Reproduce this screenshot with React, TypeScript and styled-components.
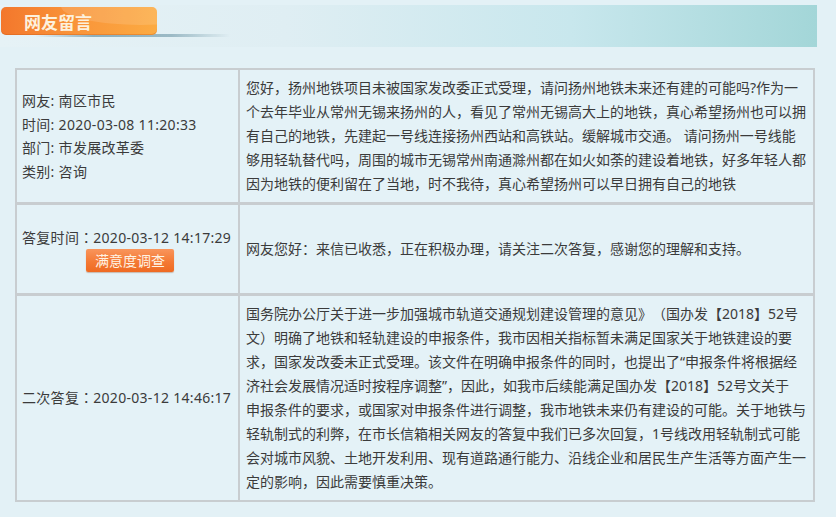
import React from "react";
import styled, { createGlobalStyle } from "styled-components";

const Global = createGlobalStyle`
  html, body { margin: 0; padding: 0; background: #e3f1f6; }
  body {
    font-family: "Noto Sans", "Noto Sans CJK SC", sans-serif;
    color: #3b3b3b;
    text-spacing-trim: space-all;
  }
`;

const Page = styled.div`
  width: 836px;
  height: 517px;
  padding-top: 5px;
  box-sizing: border-box;
  background: #e3f1f6;
  overflow: hidden;
`;

const HeaderBar = styled.div`
  position: relative;
  width: 817px;
  height: 42px;
  background: linear-gradient(90deg, #e6f2f6 0%, #dfeef3 35%, #c8e7ed 70%, #a3d6d8 100%);
  display: flex;
  align-items: flex-start;
`;

const Tab = styled.div`
  position: relative;
  margin: 2px 0 0 1px;
  width: 156px;
  height: 28px;
  border-radius: 5px;
  background: linear-gradient(90deg, #f3772c 0%, #f99339 45%, #fcab42 100%);
  box-shadow: inset 0 -1px 0 rgba(200, 90, 20, 0.35);
  display: flex;
  align-items: center;
  padding-left: 23px;
  box-sizing: border-box;
  overflow: hidden;
  &::before {
    content: "";
    position: absolute;
    left: 60px;
    top: -20px;
    width: 160px;
    height: 38px;
    border-radius: 50%;
    background: rgba(255, 255, 255, 0.13);
  }
`;

const TabShadow = styled.div`
  position: absolute;
  left: 35px;
  top: 29px;
  width: 195px;
  height: 3px;
  background: linear-gradient(90deg, rgba(70,120,140,0) 0%, rgba(70,120,140,0.55) 30%, rgba(70,120,140,0.45) 70%, rgba(70,120,140,0) 100%);
  filter: blur(0.6px);
`;

const TabTitle = styled.span`
  position: relative;
  font-family: "Noto Sans CJK SC", sans-serif;
  font-size: 17px;
  font-weight: 700;
  color: #fdf1dd;
`;

const Table = styled.div`
  margin: 21px 0 0 15px;
  width: 800px;
  box-sizing: border-box;
  display: grid;
  grid-template-columns: 221px 1fr;
  column-gap: 2px;
  row-gap: 3px;
  padding: 2px;
  background: #c8cdd0;
`;

const LeftCell = styled.div`
  background: #e4f2f7;
  display: flex;
  flex-direction: column;
  justify-content: center;
  align-items: flex-start;
  padding: 6px 5px;
  font-size: 14px;
  line-height: 23.5px;
  letter-spacing: 0.3px;
  color: #3b3b3b;
  white-space: nowrap;
`;

const RightCell = styled.div`
  background: #e4f2f7;
  display: flex;
  flex-direction: column;
  justify-content: center;
  padding: 6px 6px;
  font-size: 14px;
  line-height: 24px;
  color: #3b3b3b;
  min-height: 76px;
`;

const Line = styled.div`
  white-space: nowrap;
`;

const Colon = styled.span`
  font-family: "Noto Sans CJK TC", "Noto Sans CJK SC", sans-serif;
  letter-spacing: 0;
`;

const SurveyButton = styled.button`
  align-self: center;
  margin-left: 5px;
  height: 23px;
  padding: 0 9px;
  border: 0;
  border-radius: 2px;
  background: linear-gradient(180deg, #f9955c 0%, #f47a35 55%, #ef6a22 100%);
  color: #fff3e4;
  font-family: "Noto Sans CJK SC", sans-serif;
  font-size: 14px;
  line-height: 23px;
  letter-spacing: 0;
  box-shadow: 0 1px 1px rgba(150, 80, 40, 0.35);
  cursor: pointer;
`;

const question = [
  "您好，扬州地铁项目未被国家发改委正式受理，请问扬州地铁未来还有建的可能吗?作为一",
  "个去年毕业从常州无锡来扬州的人，看见了常州无锡高大上的地铁，真心希望扬州也可以拥",
  "有自己的地铁，先建起一号线连接扬州西站和高铁站。缓解城市交通。 请问扬州一号线能",
  "够用轻轨替代吗，周围的城市无锡常州南通滁州都在如火如荼的建设着地铁，好多年轻人都",
  "因为地铁的便利留在了当地，时不我待，真心希望扬州可以早日拥有自己的地铁",
];

const second = [
  "国务院办公厅关于进一步加强城市轨道交通规划建设管理的意见》（国办发【2018】52号",
  "文）明确了地铁和轻轨建设的申报条件，我市因相关指标暂未满足国家关于地铁建设的要",
  "求，国家发改委未正式受理。该文件在明确申报条件的同时，也提出了“申报条件将根据经",
  "济社会发展情况适时按程序调整”，因此，如我市后续能满足国办发【2018】52号文关于",
  "申报条件的要求，或国家对申报条件进行调整，我市地铁未来仍有建设的可能。关于地铁与",
  "轻轨制式的利弊，在市长信箱相关网友的答复中我们已多次回复，1号线改用轻轨制式可能",
  "会对城市风貌、土地开发利用、现有道路通行能力、沿线企业和居民生产生活等方面产生一",
  "定的影响，因此需要慎重决策。",
];

export default function App() {
  return (
    <Page>
      <Global />
      <HeaderBar>
        <TabShadow />
        <Tab>
          <TabTitle>网友留言</TabTitle>
        </Tab>
      </HeaderBar>
      <Table>
        <LeftCell>
          <Line>网友: 南区市民</Line>
          <Line>时间: 2020-03-08 11:20:33</Line>
          <Line>部门: 市发展改革委</Line>
          <Line>类别: 咨询</Line>
        </LeftCell>
        <RightCell>
          {question.map((l, i) => (
            <Line key={i}>{l}</Line>
          ))}
        </RightCell>
        <LeftCell>
          <Line>
            答复时间<Colon>：</Colon>2020-03-12 14:17:29
          </Line>
          <SurveyButton type="button">满意度调查</SurveyButton>
        </LeftCell>
        <RightCell>
          <Line>网友您好：来信已收悉，正在积极办理，请关注二次答复，感谢您的理解和支持。</Line>
        </RightCell>
        <LeftCell>
          <Line>
            二次答复<Colon>：</Colon>2020-03-12 14:46:17
          </Line>
        </LeftCell>
        <RightCell>
          {second.map((l, i) => (
            <Line key={i}>{l}</Line>
          ))}
        </RightCell>
      </Table>
    </Page>
  );
}
